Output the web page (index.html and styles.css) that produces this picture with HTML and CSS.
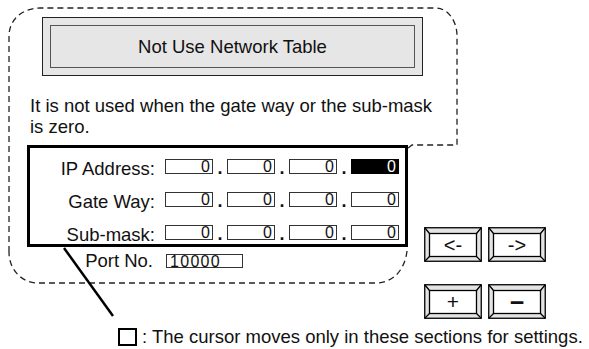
FILE: index.html
```html
<!DOCTYPE html>
<html lang="en">
<head>
    <meta charset="UTF-8">
    <meta name="viewport" content="width=device-width, initial-scale=1.0">
    <title>Not Use Network Table</title>
    <link rel="stylesheet" href="styles.css">
</head>
<body>
    <div class="canvas">
        <!-- dashed callout outline and pointer line -->
        <svg class="outline" width="589" height="349" viewBox="0 0 589 349">
            <path class="dash" d="M 9 252 L 9 36 C 9 20 22 8 40 8 L 436 8 C 447 8 457 20 457 36 L 457 145 L 412 145 L 408 148"/>
            <path class="dash" d="M 407 251 C 405 268 395 283 375 283 L 38 283 C 22 283 9 270 9 252"/>
            <line class="pointer" x1="64" y1="248" x2="113" y2="316"/>
        </svg>

        <div class="panel">
            <div class="title">
                <div class="title-inner">Not Use Network Table</div>
            </div>
            <p class="note">It is not used when the gate way or the sub-mask<br>is zero.</p>

            <div class="ipbox">
                <div class="row">
                    <span class="label">IP Address:</span>
                    <span class="field">0</span><span class="dot">.</span>
                    <span class="field">0</span><span class="dot">.</span>
                    <span class="field">0</span><span class="dot">.</span>
                    <span class="field active">0</span>
                </div>
                <div class="row">
                    <span class="label">Gate Way:</span>
                    <span class="field">0</span><span class="dot">.</span>
                    <span class="field">0</span><span class="dot">.</span>
                    <span class="field">0</span><span class="dot">.</span>
                    <span class="field">0</span>
                </div>
                <div class="row">
                    <span class="label">Sub-mask:</span>
                    <span class="field">0</span><span class="dot">.</span>
                    <span class="field">0</span><span class="dot">.</span>
                    <span class="field">0</span><span class="dot">.</span>
                    <span class="field">0</span>
                </div>
            </div>

            <div class="port">
                <span class="port-label">Port No.</span>
                <span class="port-field">10000</span>
            </div>
        </div>

        <div class="keys">
            <div class="key">
                <svg class="frame" width="58" height="35" viewBox="0 0 58 35">
                    <rect class="band" x="0.75" y="0.75" width="56.5" height="33.5"/>
                    <rect class="face" x="5.5" y="6.5" width="47" height="23"/>
                    <path d="M0.75 0.75 L5.5 6.5 M57.25 0.75 L52.5 6.5 M0.75 34.25 L5.5 29.5 M57.25 34.25 L52.5 29.5"/>
                </svg>
                <span class="key-text">&lt;-</span>
            </div>
            <div class="key">
                <svg class="frame" width="58" height="35" viewBox="0 0 58 35">
                    <rect class="band" x="0.75" y="0.75" width="56.5" height="33.5"/>
                    <rect class="face" x="5.5" y="6.5" width="47" height="23"/>
                    <path d="M0.75 0.75 L5.5 6.5 M57.25 0.75 L52.5 6.5 M0.75 34.25 L5.5 29.5 M57.25 34.25 L52.5 29.5"/>
                </svg>
                <span class="key-text">-&gt;</span>
            </div>
            <div class="key">
                <svg class="frame" width="58" height="35" viewBox="0 0 58 35">
                    <rect class="band" x="0.75" y="0.75" width="56.5" height="33.5"/>
                    <rect class="face" x="5.5" y="6.5" width="47" height="23"/>
                    <path d="M0.75 0.75 L5.5 6.5 M57.25 0.75 L52.5 6.5 M0.75 34.25 L5.5 29.5 M57.25 34.25 L52.5 29.5"/>
                </svg>
                <span class="key-text plus">+</span>
            </div>
            <div class="key">
                <svg class="frame" width="58" height="35" viewBox="0 0 58 35">
                    <rect class="band" x="0.75" y="0.75" width="56.5" height="33.5"/>
                    <rect class="face" x="5.5" y="6.5" width="47" height="23"/>
                    <path d="M0.75 0.75 L5.5 6.5 M57.25 0.75 L52.5 6.5 M0.75 34.25 L5.5 29.5 M57.25 34.25 L52.5 29.5"/>
                </svg>
                <span class="key-text minus">&minus;</span>
            </div>
        </div>

        <div class="legend">
            <span class="legend-box"></span>
            <span class="legend-text">: The cursor moves only in these sections for settings.</span>
        </div>
    </div>
</body>
</html>
```

FILE: styles.css
```css
body {
    margin: 0;
    background: #fff;
    font-family: "Liberation Sans", Arial, sans-serif;
    color: #111;
}
.canvas {
    position: relative;
    width: 589px;
    height: 349px;
    overflow: hidden;
}
.outline {
    position: absolute;
    left: 0;
    top: 0;
    pointer-events: none;
}
.dash {
    fill: none;
    stroke: #222;
    stroke-width: 1.3;
    stroke-dasharray: 6 4;
}
.pointer {
    stroke: #000;
    stroke-width: 2.5;
}

/* callout contents */
.panel {
    position: absolute;
    left: 27px;
    top: 17px;
    width: 420px;
    display: flex;
    flex-direction: column;
    align-items: flex-start;
}
.title {
    margin-left: 15px;
    width: 381px;
    height: 59px;
    box-sizing: border-box;
    border: 1px solid #222;
    background: #e6e6e6;
    padding: 7px;
}
.title-inner {
    height: 100%;
    box-sizing: border-box;
    border: 1px solid #555;
    display: flex;
    align-items: center;
    justify-content: center;
    font-size: 18.5px;
}
.note {
    margin: 19px 0 0 3px;
    font-size: 18.5px;
    line-height: 21px;
    white-space: nowrap;
}
.ipbox {
    margin-top: 8px;
    width: 381px;
    height: 102px;
    box-sizing: border-box;
    border: 3px solid #000;
    padding: 11px 0 0;
    display: flex;
    flex-direction: column;
    gap: 18px;
}
.row {
    display: flex;
    align-items: center;
    height: 15px;
}
.label {
    width: 125px;
    text-align: right;
    font-size: 18.5px;
    line-height: 15px;
    padding-top: 3px;
    margin-right: 10px;
    white-space: nowrap;
}
.field {
    width: 48px;
    height: 15px;
    box-sizing: border-box;
    border: 1px solid #333;
    background: #fff;
    text-align: right;
    padding-right: 2px;
    font-size: 16px;
    line-height: 14px;
}
.field.active {
    background: #000;
    color: #fff;
    border-color: #000;
}
.dot {
    width: 14px;
    text-align: center;
    font-size: 18px;
    font-weight: bold;
    line-height: 15px;
    padding-top: 4px;
}
.port {
    margin-top: 6px;
    display: flex;
    align-items: center;
}
.port-label {
    width: 126px;
    text-align: right;
    font-size: 18.5px;
    line-height: 16px;
    margin-right: 13px;
}
.port-field {
    width: 77px;
    height: 14px;
    box-sizing: border-box;
    border: 1px solid #333;
    padding-left: 3px;
    font-size: 16px;
    letter-spacing: 1.3px;
    line-height: 13px;
}

/* arrow and value keys */
.keys {
    position: absolute;
    left: 424px;
    top: 227px;
    display: grid;
    grid-template-columns: 58px 58px;
    column-gap: 6px;
    row-gap: 22px;
}
.key {
    display: grid;
    width: 58px;
    height: 35px;
}
.frame,
.key-text {
    grid-area: 1 / 1;
}
.frame {
    stroke: #000;
    stroke-width: 1.3;
}
.band {
    fill: #e4e4e4;
}
.face {
    fill: #fff;
}
.key-text {
    display: flex;
    align-items: center;
    justify-content: center;
    font-size: 20px;
    padding-top: 1px;
}
.key-text.plus {
    font-size: 21px;
}
.key-text.minus {
    font-size: 25px;
    font-weight: bold;
}

/* legend */
.legend {
    position: absolute;
    left: 118px;
    top: 327px;
    display: flex;
    align-items: center;
}
.legend-box {
    width: 19px;
    height: 18px;
    box-sizing: border-box;
    border: 2px solid #000;
    margin-right: 5px;
}
.legend-text {
    font-size: 18.5px;
    line-height: 20px;
    white-space: nowrap;
}
```
